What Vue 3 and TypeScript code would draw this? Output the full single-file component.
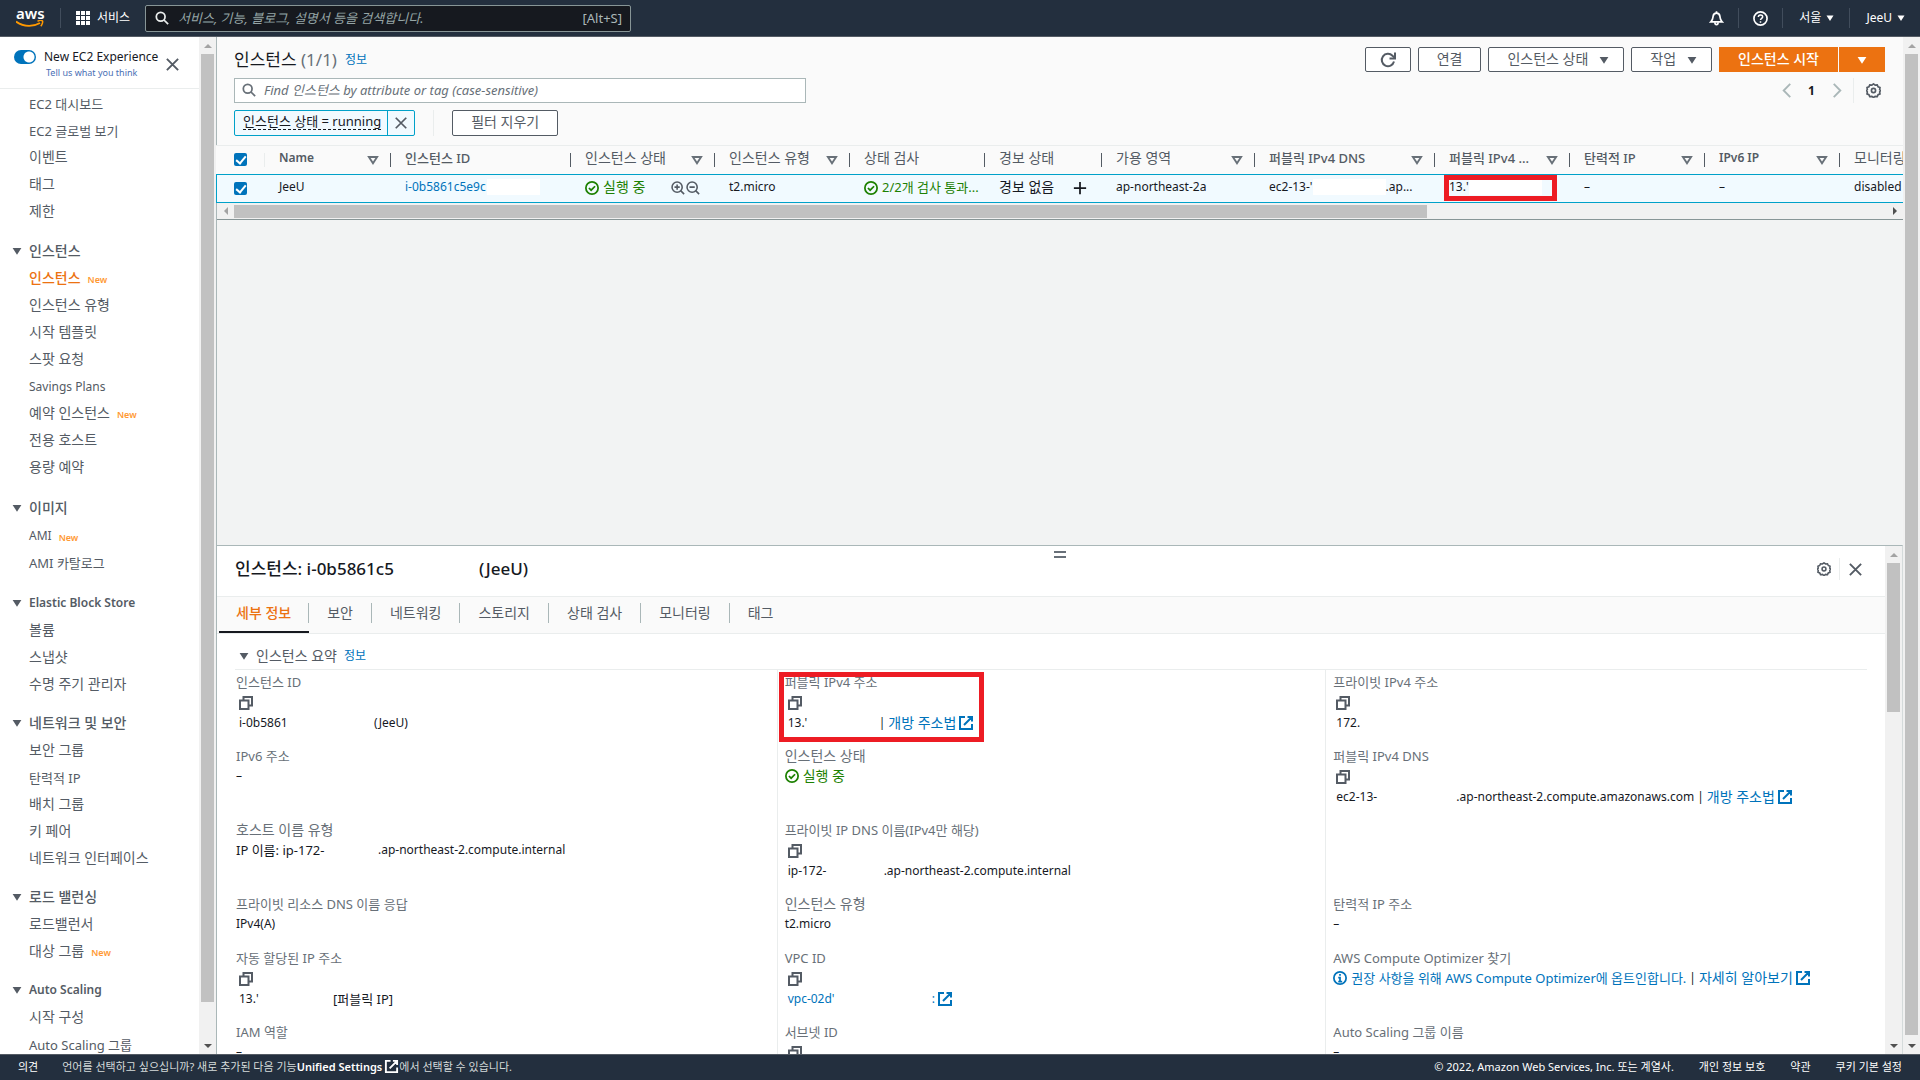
<script setup lang="ts">
import { ref } from 'vue'

interface NavItem { label: string; isNew?: boolean; active?: boolean }
interface NavSection { title: string; items: NavItem[] }
interface Part { text: string; link?: boolean; external?: boolean; width?: number; bar?: boolean }
interface Field { label: string; copy?: boolean; icon?: 'ok' | 'info'; parts: Part[]; marked?: boolean }

const topItems: NavItem[] = [
  { label: 'EC2 대시보드' },
  { label: 'EC2 글로벌 보기' },
  { label: '이벤트' },
  { label: '태그' },
  { label: '제한' },
]

const sections: NavSection[] = [
  {
    title: '인스턴스',
    items: [
      { label: '인스턴스', isNew: true, active: true },
      { label: '인스턴스 유형' },
      { label: '시작 템플릿' },
      { label: '스팟 요청' },
      { label: 'Savings Plans' },
      { label: '예약 인스턴스', isNew: true },
      { label: '전용 호스트' },
      { label: '용량 예약' },
    ],
  },
  { title: '이미지', items: [{ label: 'AMI', isNew: true }, { label: 'AMI 카탈로그' }] },
  { title: 'Elastic Block Store', items: [{ label: '볼륨' }, { label: '스냅샷' }, { label: '수명 주기 관리자' }] },
  {
    title: '네트워크 및 보안',
    items: [
      { label: '보안 그룹' },
      { label: '탄력적 IP' },
      { label: '배치 그룹' },
      { label: '키 페어' },
      { label: '네트워크 인터페이스' },
    ],
  },
  { title: '로드 밸런싱', items: [{ label: '로드밸런서' }, { label: '대상 그룹', isNew: true }] },
  { title: 'Auto Scaling', items: [{ label: '시작 구성' }, { label: 'Auto Scaling 그룹' }] },
]

const columns = [
  { label: 'Name', width: 126, sort: true },
  { label: '인스턴스 ID', width: 180, sort: false },
  { label: '인스턴스 상태', width: 144, sort: true },
  { label: '인스턴스 유형', width: 135, sort: true },
  { label: '상태 검사', width: 135, sort: false },
  { label: '경보 상태', width: 117, sort: false },
  { label: '가용 영역', width: 153, sort: true },
  { label: '퍼블릭 IPv4 DNS', width: 180, sort: true },
  { label: '퍼블릭 IPv4 ...', width: 135, sort: true },
  { label: '탄력적 IP', width: 135, sort: true },
  { label: 'IPv6 IP', width: 135, sort: true },
  { label: '모니터링', width: 135, sort: false },
]

const tabs = ['세부 정보', '보안', '네트워킹', '스토리지', '상태 검사', '모니터링', '태그']
const activeTab = ref(0)

const fields: (Field | null)[] = [
  { label: '인스턴스 ID', copy: true, parts: [{ text: 'i-0b5861', width: 135 }, { text: '(JeeU)' }] },
  {
    label: '퍼블릭 IPv4 주소',
    copy: true,
    marked: true,
    parts: [{ text: "13.'", width: 88 }, { text: '개방 주소법', link: true, external: true, bar: true }],
  },
  { label: '프라이빗 IPv4 주소', copy: true, parts: [{ text: '172.' }] },
  { label: 'IPv6 주소', parts: [{ text: '–' }] },
  { label: '인스턴스 상태', icon: 'ok', parts: [{ text: '실행 중' }] },
  {
    label: '퍼블릭 IPv4 DNS',
    copy: true,
    parts: [
      { text: 'ec2-13-', width: 120 },
      { text: '.ap-northeast-2.compute.amazonaws.com' },
      { text: '개방 주소법', link: true, external: true, bar: true },
    ],
  },
  {
    label: '호스트 이름 유형',
    parts: [{ text: 'IP 이름: ip-172-', width: 142 }, { text: '.ap-northeast-2.compute.internal' }],
  },
  {
    label: '프라이빗 IP DNS 이름(IPv4만 해당)',
    copy: true,
    parts: [{ text: 'ip-172-', width: 96 }, { text: '.ap-northeast-2.compute.internal' }],
  },
  null,
  { label: '프라이빗 리소스 DNS 이름 응답', parts: [{ text: 'IPv4(A)' }] },
  { label: '인스턴스 유형', parts: [{ text: 't2.micro' }] },
  { label: '탄력적 IP 주소', parts: [{ text: '–' }] },
  { label: '자동 할당된 IP 주소', copy: true, parts: [{ text: "13.'", width: 94 }, { text: '[퍼블릭 IP]' }] },
  {
    label: 'VPC ID',
    copy: true,
    parts: [{ text: "vpc-02d'", link: true, width: 144 }, { text: ':', link: true, external: true }],
  },
  {
    label: 'AWS Compute Optimizer 찾기',
    icon: 'info',
    parts: [
      { text: '권장 사항을 위해 AWS Compute Optimizer에 옵트인합니다.', link: true },
      { text: '자세히 알아보기', link: true, external: true, bar: true },
    ],
  },
  { label: 'IAM 역할', parts: [{ text: '–' }] },
  { label: '서브넷 ID', copy: true, parts: [] },
  { label: 'Auto Scaling 그룹 이름', parts: [{ text: '–' }] },
]

function script(text: string): string {
  const hangul = /[가-힣]/.test(text)
  const latin = /[A-Za-z]/.test(text)
  return hangul ? (latin ? 'mix' : 'ko') : 'la'
}
</script>

<template>
  <div class="app">
    <svg class="defs" aria-hidden="true">
      <symbol id="i-search" viewBox="0 0 16 16"><circle cx="6.5" cy="6.5" r="5" fill="none" stroke="currentColor" stroke-width="2" /><path d="M10 10l5 5" stroke="currentColor" stroke-width="2" /></symbol>
      <symbol id="i-close" viewBox="0 0 16 16"><path d="M2 2l12 12M14 2L2 14" stroke="currentColor" stroke-width="2" /></symbol>
      <symbol id="i-down" viewBox="0 0 16 16"><path d="M1 3h14L8 14z" fill="currentColor" /></symbol>
      <symbol id="i-sort" viewBox="0 0 16 16"><path d="M2.5 4h11L8 12.5z" fill="none" stroke="currentColor" stroke-width="2.5" /></symbol>
      <symbol id="i-copy" viewBox="0 0 16 16"><path d="M2 5.500h8.500V14H2zM5.500 5.500V2H14v8.500h-3.500" fill="none" stroke="currentColor" stroke-width="2" /></symbol>
      <symbol id="i-ext" viewBox="0 0 16 16"><path d="M7 2H2v12h12V9M9.500 2H14v4.500M14 2L6 10" fill="none" stroke="currentColor" stroke-width="2" /></symbol>
      <symbol id="i-ok" viewBox="0 0 16 16"><circle cx="8" cy="8" r="7" fill="none" stroke="currentColor" stroke-width="2" /><path d="M4.500 8l2.500 2.500 4.500-4.500" fill="none" stroke="currentColor" stroke-width="2" /></symbol>
      <symbol id="i-info" viewBox="0 0 16 16"><circle cx="8" cy="8" r="7" fill="none" stroke="currentColor" stroke-width="2" /><path d="M8 3.500v2M6 7.500h2V12M6 12h4.500" fill="none" stroke="currentColor" stroke-width="2" /></symbol>
      <symbol id="i-gear" viewBox="0 0 16 16"><path d="M8 1l1.800 1.300 2.200-.3.900 2 2 .900-.300 2.200L15.500 8l-.900 1.500.300 2.100-2 .900-.900 2-2.200-.3L8 15.500l-1.800-1.300-2.200.3-.9-2-2-.9.300-2.100L.5 8l.9-.9-.3-2.200 2-.9.900-2 2.200.3z" fill="none" stroke="currentColor" stroke-width="1.800" /><circle cx="8" cy="8" r="2.200" fill="none" stroke="currentColor" stroke-width="1.800" /></symbol>
      <symbol id="i-zoomin" viewBox="0 0 16 16"><circle cx="7" cy="7" r="5.800" fill="none" stroke="currentColor" stroke-width="1.800" /><path d="M11 11l4 4M4 7h6M7 4v6" stroke="currentColor" stroke-width="1.800" /></symbol>
      <symbol id="i-zoomout" viewBox="0 0 16 16"><circle cx="7" cy="7" r="5.800" fill="none" stroke="currentColor" stroke-width="1.800" /><path d="M11 11l4 4M4 7h6" stroke="currentColor" stroke-width="1.800" /></symbol>
      <symbol id="i-plus" viewBox="0 0 16 16"><path d="M8 1v14M1 8h14" stroke="currentColor" stroke-width="2" /></symbol>
      <symbol id="i-prev" viewBox="0 0 16 16"><path d="M12 1L5 8l7 7" fill="none" stroke="currentColor" stroke-width="2" /></symbol>
      <symbol id="i-next" viewBox="0 0 16 16"><path d="M4 1l7 7-7 7" fill="none" stroke="currentColor" stroke-width="2" /></symbol>
      <symbol id="i-refresh" viewBox="0 0 16 16"><path d="M14 9.500A6.200 6.200 0 1 1 12.500 3.700L14.500 5.500" fill="none" stroke="currentColor" stroke-width="2" /><path d="M15 .5v6H9.500" fill="none" stroke="currentColor" stroke-width="2" /></symbol>
      <symbol id="i-bell" viewBox="0 0 16 16"><path d="M2 11.500C4 9.500 4 8.500 4.300 6 4.600 3.500 6 2.300 8 2.300s3.400 1.200 3.700 3.700c.3 2.500.3 3.500 2.300 5.500z" fill="none" stroke="currentColor" stroke-width="1.800" /><path d="M8 .3v2M6.300 12c0 3.400 3.400 3.400 3.400 0" fill="none" stroke="currentColor" stroke-width="1.800" /></symbol>
      <symbol id="i-help" viewBox="0 0 16 16"><circle cx="8" cy="8" r="7" fill="none" stroke="currentColor" stroke-width="1.800" /><path d="M5.700 6.500C5.700 3.300 10.500 3.500 10.300 6.300 10.200 7.800 8 7.900 8 9.700M8 10.800v1.800" fill="none" stroke="currentColor" stroke-width="1.600" /></symbol>
      <symbol id="i-grid" viewBox="0 0 14 14"><path d="M0 0h4v4H0zM5 0h4v4H5zM10 0h4v4h-4zM0 5h4v4H0zM5 5h4v4H5zM10 5h4v4h-4zM0 10h4v4H0zM5 10h4v4H5zM10 10h4v4h-4z" fill="currentColor" /></symbol>
    </svg>

    <header class="top">
      <a class="logo" href="#" aria-label="aws">
        <span>aws</span>
        <svg width="28" height="9" viewBox="0 0 28 9"><path d="M0 1.500C8 7 17 7 24 3" fill="none" stroke="#f90" stroke-width="2" /><path d="M21.500 1.200c2-.8 4.500-.8 5-.2.500.800-.2 3.500-1.700 5.200" fill="none" stroke="#f90" stroke-width="1.500" /></svg>
      </a>
      <button class="services" type="button"><svg class="g14"><use href="#i-grid" /></svg>서비스</button>
      <label class="global">
        <svg class="g14"><use href="#i-search" /></svg>
        <input type="search" aria-label="검색" placeholder="서비스, 기능, 블로그, 설명서 등을 검색합니다." />
        <span>[Alt+S]</span>
      </label>
      <nav class="tools">
        <button type="button" aria-label="알림"><svg class="g15"><use href="#i-bell" /></svg></button>
        <button type="button" aria-label="도움말"><svg class="g15"><use href="#i-help" /></svg></button>
        <button type="button">서울<svg class="g8"><use href="#i-down" /></svg></button>
        <button type="button">JeeU<svg class="g8"><use href="#i-down" /></svg></button>
      </nav>
    </header>

    <div class="body">
      <aside class="side">
        <div class="side-main">
          <div class="experience">
            <label class="switch"><input type="checkbox" checked />New EC2 Experience</label>
            <a href="#">Tell us what you think</a>
            <button type="button" aria-label="닫기"><svg class="g15"><use href="#i-close" /></svg></button>
          </div>
          <nav class="nav">
            <a v-for="item in topItems" :key="item.label" href="#" :class="script(item.label)">{{ item.label }}</a>
            <section v-for="s in sections" :key="s.title">
              <h3 :class="script(s.title)"><svg class="g10"><use href="#i-down" /></svg>{{ s.title }}</h3>
              <a v-for="item in s.items" :key="item.label" href="#" :class="[script(item.label), { active: item.active }]">{{ item.label }}<small v-if="item.isNew">New</small></a>
            </section>
          </nav>
        </div>
        <div class="vbar"><i class="up"></i><b :style="{ flexGrow: 948 }"></b><s :style="{ flexGrow: 35 }"></s><i class="dn"></i></div>
      </aside>

      <main class="main">
        <section class="list">
          <div class="headline">
            <h1>인스턴스 <span>(1/1)</span></h1>
            <a class="info" href="#">정보</a>
            <div class="actions">
              <button class="btn" type="button" aria-label="새로 고침"><svg class="g16"><use href="#i-refresh" /></svg></button>
              <button class="btn" type="button">연결</button>
              <button class="btn" type="button">인스턴스 상태<svg class="g10"><use href="#i-down" /></svg></button>
              <button class="btn" type="button">작업<svg class="g10"><use href="#i-down" /></svg></button>
              <div class="launch">
                <button type="button">인스턴스 시작</button>
                <button type="button" aria-label="시작 옵션"><svg class="g10"><use href="#i-down" /></svg></button>
              </div>
            </div>
          </div>
          <div class="filter">
            <label class="find">
              <svg class="g14"><use href="#i-search" /></svg>
              <input type="search" aria-label="인스턴스 찾기" placeholder="Find 인스턴스 by attribute or tag (case-sensitive)" />
            </label>
            <div class="pager">
              <button type="button" aria-label="이전"><svg class="g15"><use href="#i-prev" /></svg></button>
              <b>1</b>
              <button type="button" aria-label="다음"><svg class="g15"><use href="#i-next" /></svg></button>
              <button class="gear" type="button" aria-label="설정"><svg class="g15"><use href="#i-gear" /></svg></button>
            </div>
          </div>
          <div class="tokens">
            <div class="token"><span><button type="button">인스턴스 상태 = running</button></span><button class="drop" type="button" aria-label="제거"><svg class="g14"><use href="#i-close" /></svg></button></div>
            <div class="clear"><button class="btn" type="button">필터 지우기</button></div>
          </div>

          <div class="table-wrap">
            <table>
              <colgroup>
                <col class="pick" />
                <col v-for="c in columns" :key="c.label" :style="{ width: c.width + 'px' }" />
              </colgroup>
              <thead>
                <tr>
                  <th><input class="check" type="checkbox" checked aria-label="모두 선택" /></th>
                  <th v-for="c in columns" :key="c.label">
                    <div class="th"><span :class="script(c.label)">{{ c.label }}</span><svg v-if="c.sort" class="g12"><use href="#i-sort" /></svg></div>
                  </th>
                </tr>
              </thead>
              <tbody>
                <tr>
                  <td><input class="check" type="checkbox" checked aria-label="JeeU 선택" /></td>
                  <td>JeeU</td>
                  <td><div class="td"><a class="cut" href="#">i-0b5861c5e9c</a><i class="mask"></i></div></td>
                  <td>
                    <div class="td"><span class="ok ko"><svg class="g14"><use href="#i-ok" /></svg>실행 중</span><span class="zooms"><svg class="g14"><use href="#i-zoomin" /></svg><svg class="g14"><use href="#i-zoomout" /></svg></span></div>
                  </td>
                  <td>t2.micro</td>
                  <td><div class="clip ok mix"><svg class="g14"><use href="#i-ok" /></svg><span>2/2개 검사 통과...</span></div></td>
                  <td><div class="td ko">경보 없음<button class="plus" type="button" aria-label="경보 추가"><svg class="g14"><use href="#i-plus" /></svg></button></div></td>
                  <td>ap-northeast-2a</td>
                  <td><div class="td"><span>ec2-13-'</span><i class="mask wide"></i><span>.ap...</span></div></td>
                  <td><div class="td"><span>13.'</span><i class="mask wide"></i><i class="mark"></i></div></td>
                  <td>–</td>
                  <td>–</td>
                  <td>disabled</td>
                </tr>
              </tbody>
            </table>
          </div>
          <div class="hbar"><i class="lf"></i><b :style="{ flexGrow: 1194 }"></b><s :style="{ flexGrow: 459 }"></s><i class="rt"></i></div>
        </section>

        <section class="panel">
          <i class="grip"></i>
          <div class="panel-main">
            <div class="panel-head">
              <h2><span>인스턴스: i-0b5861c5</span>(JeeU)</h2>
              <button type="button" aria-label="설정"><svg class="g14"><use href="#i-gear" /></svg></button>
              <button type="button" aria-label="닫기"><svg class="g15"><use href="#i-close" /></svg></button>
            </div>
            <div class="tabs" role="tablist">
              <button v-for="(t, i) in tabs" :key="t" type="button" role="tab" :aria-selected="i === activeTab" :class="{ on: i === activeTab }" @click="activeTab = i"><span>{{ t }}</span></button>
            </div>
            <div class="summary">
              <h3><svg class="g10"><use href="#i-down" /></svg>인스턴스 요약<a class="info" href="#">정보</a></h3>
            </div>
            <dl class="grid">
              <div v-for="(f, n) in fields" :key="n" class="cell">
                <template v-if="f">
                  <dt :class="{ ko: script(f.label) === 'ko' }">{{ f.label }}</dt>
                  <dd v-if="f.copy" class="copy"><button type="button" aria-label="복사"><svg class="g16"><use href="#i-copy" /></svg></button></dd>
                  <dd :class="{ after: f.copy, ok: f.icon === 'ok' }">
                    <svg v-if="f.icon" class="g14 lead" :class="f.icon"><use :href="'#i-' + f.icon" /></svg>
                    <template v-for="(p, k) in f.parts" :key="k">
                      <span v-if="p.bar" class="bar">|</span>
                      <a v-if="p.link" href="#" :class="script(p.text)" :style="p.width ? { width: p.width + 'px' } : {}">{{ p.text }}<svg v-if="p.external" class="g16"><use href="#i-ext" /></svg></a>
                      <span v-else :class="script(p.text)" :style="p.width ? { width: p.width + 'px' } : {}">{{ p.text }}</span>
                    </template>
                  </dd>
                  <i v-if="f.marked" class="mark"></i>
                </template>
              </div>
            </dl>
          </div>
          <div class="vbar"><i class="up"></i><b :style="{ flexGrow: 149 }"></b><s :style="{ flexGrow: 325 }"></s><i class="dn"></i></div>
        </section>
      </main>
      <div class="vbar"><i class="up"></i><b :style="{ flexGrow: 981 }"></b><s :style="{ flexGrow: 2 }"></s><i class="dn"></i></div>
    </div>

    <footer class="foot">
      <a class="feedback" href="#">의견</a>
      <p>언어를 선택하고 싶으십니까? 새로 추가된 다음 기능<a href="#">Unified Settings<svg class="g15"><use href="#i-ext" /></svg></a>에서 선택할 수 있습니다.</p>
      <div class="legal">
        <span>© 2022, Amazon Web Services, Inc. 또는 계열사.</span>
        <a href="#">개인 정보 보호</a>
        <a href="#">약관</a>
        <a href="#">쿠키 기본 설정</a>
      </div>
    </footer>
  </div>
</template>

<style>
body { margin: 0; }
</style>

<style scoped>
* { box-sizing: border-box; }
.app {
  display: flex;
  flex-direction: column;
  height: 100vh;
  overflow: hidden;
  font: 12px/20px "Noto Sans", "Noto Sans CJK KR", sans-serif;
  color: #16191f;
  background: #f2f3f3;
}
.defs { position: absolute; width: 0; height: 0; }
svg { flex: none; }
.g8 { width: 8px; height: 8px; }
.g10 { width: 10px; height: 10px; }
.g12 { width: 12px; height: 12px; }
.g14 { width: 14px; height: 14px; }
.g15 { width: 15px; height: 15px; }
.g16 { width: 16px; height: 16px; }
.ko { font-size: 14px; }
.mix { font-size: 13px; }
.la { font-size: 12px; }
a { color: #0073bb; text-decoration: none; }
button, input { font: inherit; color: inherit; background: none; border: 0; padding: 0; margin: 0; outline: 0; }
button { display: flex; align-items: center; justify-content: center; }
h1, h2, h3, p, dl, dd { margin: 0; }
input[type="search"] { appearance: none; flex: 1; min-width: 0; font-style: italic; }

/* top bar */
.top {
  flex: none;
  display: flex;
  align-items: center;
  height: 37px;
  background: #232f3e;
  border-bottom: 1px solid #545b64;
  color: #fff;
}
.logo {
  display: flex;
  flex-direction: column;
  width: 61px;
  height: 20px;
  padding-left: 16px;
  border-right: 1px solid #414d5c;
  color: #fff;
  font-size: 15px;
  font-weight: 600;
  line-height: 10px;
}
.logo svg { margin-top: 2px; }
.services { gap: 7px; width: 84px; }
.global {
  display: flex;
  align-items: center;
  flex: 0 1 486px;
  height: 27px;
  padding: 0 8px 0 9px;
  gap: 9px;
  border: 1px solid #879596;
  border-radius: 2px;
  background: #16191f;
  color: #eaeded;
  font-size: 13px;
}
.global span { color: #aab7b8; }
.global input::placeholder { color: #95a5a6; opacity: 1; }
.tools { display: flex; margin-left: auto; }
.tools button { height: 20px; padding: 0 15px 0 16px; gap: 5px; border-left: 1px solid #414d5c; }
.tools button:first-child { border: 0; padding: 0 14px; }
.tools button:nth-child(2) { padding: 0 14px; }

.body { flex: 1; min-height: 0; display: flex; }

/* scroll bars */
.vbar { flex: none; width: 17px; display: flex; flex-direction: column; align-items: center; background: #f1f1f1; }
.vbar b { flex-basis: 0; width: 13px; background: #c1c1c1; }
.vbar s { flex-basis: 0; }
.vbar i { height: 17px; display: flex; align-items: center; }
.vbar i::before { content: ""; border: 4px solid transparent; border-top: 0; border-bottom-color: #a3a3a3; }
.vbar .dn::before { border-top: 4px solid #505050; border-bottom: 0; }
.hbar { flex: none; display: flex; height: 17px; align-items: center; background: #f1f1f1; border-bottom: 1px solid #879596; }
.hbar b { flex-basis: 0; height: 13px; background: #c1c1c1; }
.hbar s { flex-basis: 0; }
.hbar i { width: 17px; display: flex; justify-content: center; }
.hbar i::before { content: ""; border: 4px solid transparent; border-left: 0; border-right-color: #a3a3a3; }
.hbar .rt::before { border-left: 4px solid #505050; border-right: 0; }

/* navigation */
.side { flex: none; display: flex; width: 217px; background: #fff; border-right: 1px solid #aab7b8; color: #545b64; }
.side-main { flex: 1; min-width: 0; overflow: hidden; }
.experience {
  display: grid;
  grid-template-columns: minmax(0, 1fr) 15px;
  align-content: start;
  height: 52px;
  padding: 10px 19px 0 14px;
  border-bottom: 1px solid #eaeded;
}
.switch { display: flex; gap: 8px; align-items: center; color: #16191f; white-space: nowrap; }
.switch input {
  appearance: none;
  flex: none;
  width: 22px;
  height: 14px;
  border-radius: 7px;
  background: radial-gradient(circle at 15px 7px, #fff 5px, #0073bb 6px);
}
.experience a { grid-row: 2; padding-left: 32px; font-size: 9px; line-height: 12px; color: #4a6fb5; white-space: nowrap; }
.experience button { grid-row: 1 / 3; grid-column: 2; padding-top: 2px; color: #545b64; }
.nav { padding-top: 1px; }
.nav a { display: flex; align-items: center; height: 27px; padding-left: 29px; color: #545b64; white-space: nowrap; }
.nav section { margin-top: 12px; }
.nav section + section { margin-top: 11px; }
.nav section:nth-of-type(3), .nav section:nth-of-type(2) { margin-top: 13px; }
.nav h3 { display: flex; align-items: center; gap: 7px; height: 28px; padding-left: 12px; font-weight: 600; }
.nav h3.ko { font-weight: 500; }
.nav .ko { padding-bottom: 1px; }
.nav .active { color: #ec7211; font-weight: 500; }
.nav small { padding: 4px 0 0 7px; font-size: 9px; font-weight: 600; color: #ff9933; }

/* instance list */
.main { flex: 1; min-width: 0; display: grid; grid-template-rows: minmax(0, 508fr) minmax(0, 509fr); }
.list { display: flex; flex-direction: column; min-width: 0; }
.headline { display: flex; align-items: center; height: 41px; padding: 4px 18px 0 17px; background: #fafafa; }
h1 { font-size: 17px; font-weight: 400; }
h1 span { color: #687078; }
.info { margin-left: 8px; font-size: 12px; font-weight: 400; }
.actions { display: flex; gap: 7px; margin-left: auto; }
.btn { height: 25px; padding: 0 18px 2px; gap: 11px; border: 1px solid #545b64; border-radius: 2px; background: #fff; color: #545b64; font-size: 14px; line-height: 20px; }
.actions .g10 { margin-right: -4px; margin-top: 2px; }
.actions .g16 { margin: 2px -4px 0; }
.launch { display: flex; gap: 1px; font-size: 14px; color: #fff; }
.launch button { height: 25px; padding: 0 19px 2px; background: #ec7211; font-weight: 500; }
.launch button + button { padding: 0 18px; }
.actions .launch .g10 { margin: 0; }
.filter { display: flex; height: 32px; padding: 0 18px 0 17px; background: #fafafa; }
.find { display: flex; align-items: center; flex: 0 1 572px; height: 25px; padding: 0 7px 1px; gap: 8px; border: 1px solid #aab7b8; background: #fff; color: #687078; font-size: 13px; }
.find input::placeholder { color: #687078; opacity: 1; }
.pager { display: flex; align-items: center; height: 25px; margin-left: auto; gap: 14px; color: #aab7b8; }
.pager b { color: #16191f; width: 8px; }
.pager .gear { height: 25px; padding: 0 4px 0 12px; margin-left: -6px; border-left: 1px solid #eaeded; color: #545b64; }
.tokens { display: flex; height: 35px; padding: 0 18px 0 17px; background: #fafafa; }
.token { display: flex; height: 26px; border: 1px solid #00a1c9; background: #f1faff; font-size: 13px; border-radius: 2px; }
.token span { padding: 2px 6px 0 8px; border-right: 1px solid #00a1c9; }
.token span button { height: 17px; border-bottom: 1px dashed #16191f; }
.token .drop { width: 26px; color: #545b64; }
.clear { height: 26px; margin-left: 18px; padding-left: 18px; border-left: 1px solid #eaeded; }
.clear .btn { height: 26px; }

.table-wrap { flex: none; overflow: hidden; margin-left: -1px; background: #fafafa; border-top: 1px solid #eaeded; }
table { table-layout: fixed; width: 1759px; border-collapse: separate; border-spacing: 0; }
.pick { width: 49px; }
th, td { padding: 0 0 0 14px; text-align: left; font-weight: 400; white-space: nowrap; }
th:first-child, td:first-child { padding-left: 18px; }
th { height: 28px; padding-bottom: 5px; color: #545b64; background: linear-gradient(#545b64, #545b64) right 7px / 1px 14px no-repeat; }
th:first-child { background-image: linear-gradient(#eaeded, #eaeded); padding-bottom: 1px; }
td { height: 29px; padding-bottom: 3px; background: #f1faff; border: solid #00a1c9; border-width: 1px 0; }
td:first-child { border-left-width: 1px; padding-left: 17px; padding-bottom: 1px; }
.th { display: flex; align-items: center; padding-right: 12px; gap: 10px; }
.th span { flex: 1; min-width: 0; }
.th .la { font-weight: 600; }
.th .mix { font-weight: 500; }
.th .g12 { margin-top: 5px; color: #687078; }
.check { appearance: none; display: block; width: 13px; height: 13px; border-radius: 2px; background: #0073bb; }
.check::after { content: ""; display: block; width: 4px; height: 8px; margin: 1px 0 0 4px; border: solid #fff; border-width: 0 2px 2px 0; transform: rotate(40deg); }
.td { position: relative; display: flex; align-items: center; height: 24px; padding-right: 15px; }
.cut { width: 82px; overflow: hidden; }
.mask { width: 53px; height: 16px; background: #fff; }
.mask.wide { width: 73px; }
.ok { color: #1d8102; }
.td .ok, .clip { display: flex; align-items: center; gap: 4px; }
td svg { margin-top: 2px; }
.zooms { display: flex; gap: 1px; margin-left: auto; color: #545b64; }
.plus { margin-left: auto; }
.mark { position: absolute; border: 5px solid #ed1c24; }
.td .mark { left: -5px; right: 13px; top: 0; height: 26px; }

/* details panel */
.panel { position: relative; display: flex; min-width: 0; border-top: 1px solid #aab7b8; border-right: 1px solid #d5dbdb; background: #fff; overflow: hidden; }
.panel-main { flex: 1; min-width: 0; }
.panel-head { display: flex; align-items: center; height: 51px; padding: 0 14px 4px 18px; color: #545b64; border-bottom: 1px solid #eaeded; }
.grip { position: absolute; top: 5px; left: 50%; width: 12px; height: 7px; border: solid #687078; border-width: 2px 0; transform: translateX(-50%); }
h2 { flex: 1; font-size: 17px; font-weight: 500; color: #16191f; }
h2 span { display: inline-block; width: 244px; }
.panel-head button { height: 22px; padding: 0 8px; }
.panel-head button + button { border-left: 1px solid #eaeded; }
.tabs { display: flex; height: 37px; padding-left: 2px; background: #fafafa; border-bottom: 1px solid #eaeded; }
.tabs button { height: 36px; padding-bottom: 4px; font-size: 14px; color: #545b64; }
.tabs span { padding: 0 18px; border-right: 1px solid #aab7b8; }
.tabs button:last-child span { border: 0; }
.tabs .on { color: #ec7211; font-weight: 500; border-bottom: 2px solid #16191f; padding-bottom: 2px; }
.tabs .on span { padding: 0 17px; }
.summary { padding: 11px 18px 0; }
.summary h3 { display: flex; align-items: center; height: 25px; padding: 0 0 2px 4px; gap: 7px; font-size: 14px; font-weight: 400; color: #545b64; border-bottom: 1px solid #eaeded; }
.summary .info { margin-left: 0; }
.grid { display: grid; grid-template-columns: repeat(3, minmax(0, 1fr)); padding: 0 11px; }
.cell { position: relative; padding: 2px 7px 12px; border-left: 1px solid #eaeded; white-space: nowrap; }
.cell:nth-child(3n + 1) { border-color: transparent; }
dt { color: #687078; font-size: 13px; }
dt.ko { font-size: 14px; }
dd { display: flex; align-items: center; height: 20px; }
dd.copy { height: 22px; padding-left: 2px; color: #545b64; }
dd.after { height: 18px; padding-left: 3px; }
dd a { display: inline-flex; align-items: center; gap: 2px; }
.lead { margin-right: 4px; }
.lead.info { margin-left: 0; color: #0073bb; }
.bar { padding: 0 3px; }
.cell > .mark { left: 1px; top: 2px; width: 205px; height: 70px; }

/* footer */
.foot { flex: none; display: flex; align-items: center; height: 26px; padding: 0 18px 2px; background: #232f3e; border-top: 1px solid #545b64; font-size: 11px; color: #d5dbdb; }
.foot a { color: #fff; }
.feedback { margin-right: 24px; }
.foot p { display: flex; align-items: center; }
.foot p a { display: flex; align-items: center; font-weight: 600; gap: 2px; }
.legal { display: flex; gap: 25px; margin-left: auto; color: #fff; }
</style>
